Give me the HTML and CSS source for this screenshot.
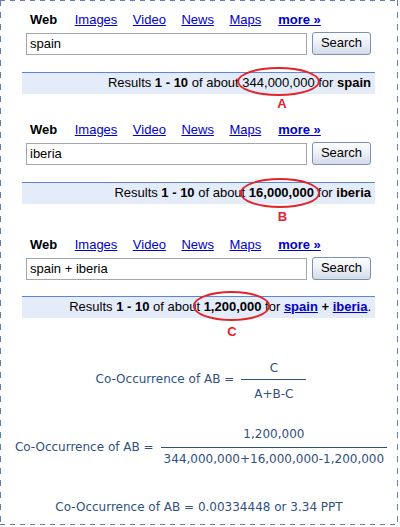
FILE: index.html
```html
<!DOCTYPE html>
<html>
<head>
<meta charset="utf-8">
<link rel="stylesheet" href="styles.css">
</head>
<body>
<div class="page">
  <section class="serp serp-a">
    <nav class="tabs"><b class="web">Web</b><a href="#">Images</a><a href="#">Video</a><a href="#">News</a><a href="#">Maps</a><a href="#" class="more">more »</a></nav>
    <div class="searchrow"><div class="query">spain</div><button class="btn">Search</button></div>
    <div class="bar">Results <b>1 - 10</b> of about <span class="hit hit-a">344,000,000<span class="ring"></span><span class="tag">A</span></span> for <b>spain</b></div>
  </section>
  <section class="serp serp-b">
    <nav class="tabs"><b class="web">Web</b><a href="#">Images</a><a href="#">Video</a><a href="#">News</a><a href="#">Maps</a><a href="#" class="more">more »</a></nav>
    <div class="searchrow"><div class="query">iberia</div><button class="btn">Search</button></div>
    <div class="bar">Results <b>1 - 10</b> of about <b class="hit hit-b">16,000,000<span class="ring"></span><span class="tag">B</span></b> for <b>iberia</b></div>
  </section>
  <section class="serp serp-c">
    <nav class="tabs"><b class="web">Web</b><a href="#">Images</a><a href="#">Video</a><a href="#">News</a><a href="#">Maps</a><a href="#" class="more">more »</a></nav>
    <div class="searchrow"><div class="query">spain + iberia</div><button class="btn">Search</button></div>
    <div class="bar">Results <b>1 - 10</b> of about <b class="hit hit-c">1,200,000<span class="ring"></span><span class="tag">C</span></b> for <a href="#" class="qlink">spain</a> <b>+</b> <a href="#" class="qlink">iberia</a>.</div>
  </section>

  <div class="eq eq-frac eq-1">
    <span class="lhs">Co-Occurrence of AB =</span>
    <div class="frac frac-1"><div class="num">C</div><div class="den">A+B-C</div></div>
  </div>
  <div class="eq eq-frac eq-2">
    <span class="lhs">Co-Occurrence of AB =</span>
    <div class="frac frac-2"><div class="num">1,200,000</div><div class="den">344,000,000+16,000,000-1,200,000</div></div>
  </div>
  <div class="eq eq-3">
    <span class="lhs">Co-Occurrence of AB = 0.00334448 or 3.34 PPT</span>
  </div>
</div>
</body>
</html>
```
FILE: styles.css
```css
html, body {
  margin: 0;
  padding: 0;
  background: #ffffff;
}

.page {
  box-sizing: border-box;
  width: 398px;
  height: 525px;
  padding: 12px 22px 0 22px;
  background:
    repeating-linear-gradient(90deg, #5f7fb5 0 5px, transparent 5px 10px) top left / 100% 1px no-repeat,
    repeating-linear-gradient(90deg, #5f7fb5 0 5px, transparent 5px 10px) bottom left / 100% 1px no-repeat,
    repeating-linear-gradient(180deg, #5f7fb5 0 6px, transparent 6px 12px) top left / 1px 100% no-repeat,
    repeating-linear-gradient(180deg, #5f7fb5 0 6px, transparent 6px 12px) top right / 1px 100% no-repeat,
    #ffffff;
  font-family: "Liberation Sans", Arial, sans-serif;
  font-size: 13px;
  color: #000;
}

.serp-b { margin-top: 28px; }
.serp-c { margin-top: 33px; }

.tabs {
  display: flex;
  gap: 15.5px;
  padding-left: 8px;
  line-height: 16px;
  height: 16px;
}
.tabs a {
  color: #0000cc;
  text-decoration: underline;
}
.tabs .web { margin-right: 2px; }
.tabs .more { font-weight: bold; margin-left: 1.5px; }

.searchrow {
  display: flex;
  align-items: flex-end;
  gap: 5px;
  margin-top: 4px;
  padding-left: 4px;
  height: 23px;
}
.query {
  box-sizing: border-box;
  width: 281px;
  height: 22px;
  border: 1px solid #a3a6aa;
  padding: 0 3px;
  line-height: 20px;
  background: #fff;
}
.btn {
  box-sizing: border-box;
  width: 59px;
  height: 23px;
  margin: 0;
  padding: 0 0 2px 0;
  border: 1px solid #7d90b3;
  border-radius: 3px;
  background: linear-gradient(#fdfdfe 0%, #eef1f6 45%, #d3dbe8 100%);
  font-family: "Liberation Sans", Arial, sans-serif;
  font-size: 13px;
  line-height: 20px;
  color: #000;
  text-align: center;
}

.bar {
  box-sizing: border-box;
  width: 353px;
  height: 22px;
  margin-top: 17px;
  border-top: 1px solid #5d86d6;
  background: #e5ecf9;
  padding: 0 4px 1px 0;
  line-height: 20px;
  text-align: right;
  white-space: nowrap;
}
.serp-c .bar { margin-top: 16px; }

.qlink {
  color: #0000cc;
  font-weight: bold;
  text-decoration: underline;
}

.hit {
  position: relative;
}
.ring {
  position: absolute;
  box-sizing: border-box;
  border: 2px solid #e2252b;
  border-radius: 50%;
}
.tag {
  position: absolute;
  left: 50%;
  transform: translateX(-50%);
  font-weight: bold;
  font-size: 13px;
  line-height: 15px;
  color: #e2252b;
}
.hit-a .ring { left: -5px; right: -5px; top: -8px; bottom: -6px; }
.hit-a .tag { top: 21px; margin-left: 3.5px; }
.hit-b .ring { left: -9px; right: -6px; top: -7px; bottom: -7.5px; }
.hit-b .tag { top: 23.5px; margin-left: 1px; }
.hit-c .ring { left: -11px; right: -9px; top: -8px; bottom: -6.5px; }
.hit-c .tag { top: 25px; margin-left: -0.7px; }

.eq {
  display: flex;
  justify-content: center;
  align-items: center;
  gap: 7px;
  font-family: "DejaVu Sans", Verdana, sans-serif;
  font-size: 12px;
  line-height: 14px;
  color: #30507f;
  white-space: nowrap;
}
.eq-frac { padding-left: 4px; }
.eq-1 { margin-top: 38px; }
.eq-2 { margin-top: 26px; }
.eq-3 { margin-top: 34px; }

.frac {
  display: flex;
  flex-direction: column;
  align-items: stretch;
  text-align: center;
}
.den {
  border-top: 1px solid #30507f;
}
.frac-1 { padding-top: 4.5px; }
.frac-1 .num { margin-bottom: 4px; }
.frac-1 .den { padding: 7.5px 13px 0 13px; }
.frac-2 .num { margin-bottom: 5.5px; }
.frac-2 .den { padding: 4.5px 3px 0 3px; }
```
